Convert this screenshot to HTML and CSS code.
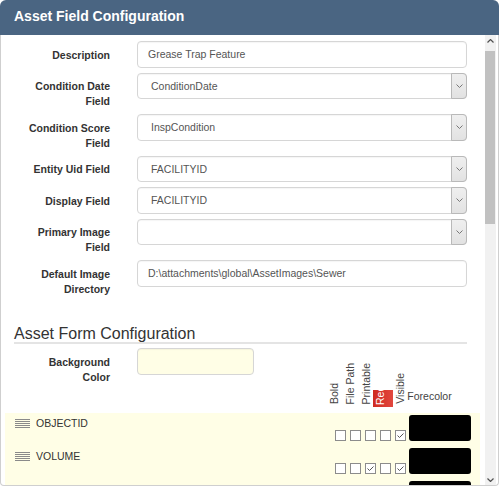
FILE: index.html
```html
<!DOCTYPE html>
<html>
<head>
<meta charset="utf-8">
<link rel="stylesheet" href="styles.css">
</head>
<body>
<div class="panel">
  <div class="header">Asset Field Configuration</div>
  <div class="body">
    <div class="content">
      <div class="frow">
        <div class="flabel">Description</div>
        <div class="input">Grease Trap Feature</div>
      </div>
      <div class="frow">
        <div class="flabel">Condition Date Field</div>
        <div class="input select"><span class="val">ConditionDate</span><span class="arrow"><svg width="7" height="4" viewBox="0 0 7 4"><polyline points="0.5,0.5 3.5,3.5 6.5,0.5" fill="none" stroke="#777" stroke-width="1"/></svg></span></div>
      </div>
      <div class="frow">
        <div class="flabel">Condition Score Field</div>
        <div class="input select"><span class="val">InspCondition</span><span class="arrow"><svg width="7" height="4" viewBox="0 0 7 4"><polyline points="0.5,0.5 3.5,3.5 6.5,0.5" fill="none" stroke="#777" stroke-width="1"/></svg></span></div>
      </div>
      <div class="frow">
        <div class="flabel">Entity Uid Field</div>
        <div class="input select"><span class="val">FACILITYID</span><span class="arrow"><svg width="7" height="4" viewBox="0 0 7 4"><polyline points="0.5,0.5 3.5,3.5 6.5,0.5" fill="none" stroke="#777" stroke-width="1"/></svg></span></div>
      </div>
      <div class="frow">
        <div class="flabel">Display Field</div>
        <div class="input select"><span class="val">FACILITYID</span><span class="arrow"><svg width="7" height="4" viewBox="0 0 7 4"><polyline points="0.5,0.5 3.5,3.5 6.5,0.5" fill="none" stroke="#777" stroke-width="1"/></svg></span></div>
      </div>
      <div class="frow">
        <div class="flabel">Primary Image Field</div>
        <div class="input select"><span class="val"></span><span class="arrow"><svg width="7" height="4" viewBox="0 0 7 4"><polyline points="0.5,0.5 3.5,3.5 6.5,0.5" fill="none" stroke="#777" stroke-width="1"/></svg></span></div>
      </div>
      <div class="frow">
        <div class="flabel">Default Image Directory</div>
        <div class="input">D:\attachments\global\AssetImages\Sewer</div>
      </div>

      <div class="legend">Asset Form Configuration</div>

      <div class="bgsec">
        <div class="flabel">Background Color</div>
        <div class="input bginput"></div>
        <div class="colheads">
          <div class="vl">Bold</div>
          <div class="vl gap">File Path</div>
          <div class="vl gap">Printable</div>
          <div class="req">Required</div>
          <div class="vl">Visible</div>
          <div class="fchead">Forecolor</div>
        </div>
      </div>

      <div class="list">
        <div class="lrow">
          <svg class="drag" width="15" height="9" viewBox="0 0 15 9"><g stroke="#8a8a8a" stroke-width="1"><line x1="0" y1="0.5" x2="15" y2="0.5"/><line x1="0" y1="2.5" x2="15" y2="2.5"/><line x1="0" y1="4.5" x2="15" y2="4.5"/><line x1="0" y1="6.5" x2="15" y2="6.5"/><line x1="0" y1="8.5" x2="15" y2="8.5"/></g></svg>
          <span class="name">OBJECTID</span>
          <div class="checks">
            <span class="cb"></span><span class="cb"></span><span class="cb"></span><span class="cb"></span>
            <span class="cb"><svg width="9" height="9" viewBox="0 0 9 9"><polyline points="1.5,4.5 3.5,6.5 7.5,2.5" fill="none" stroke="#555" stroke-width="1"/></svg></span>
          </div>
          <div class="fc"></div>
        </div>
        <div class="lrow">
          <svg class="drag" width="15" height="9" viewBox="0 0 15 9"><g stroke="#8a8a8a" stroke-width="1"><line x1="0" y1="0.5" x2="15" y2="0.5"/><line x1="0" y1="2.5" x2="15" y2="2.5"/><line x1="0" y1="4.5" x2="15" y2="4.5"/><line x1="0" y1="6.5" x2="15" y2="6.5"/><line x1="0" y1="8.5" x2="15" y2="8.5"/></g></svg>
          <span class="name">VOLUME</span>
          <div class="checks">
            <span class="cb"></span><span class="cb"></span>
            <span class="cb"><svg width="9" height="9" viewBox="0 0 9 9"><polyline points="1.5,4.5 3.5,6.5 7.5,2.5" fill="none" stroke="#555" stroke-width="1"/></svg></span>
            <span class="cb"></span>
            <span class="cb"><svg width="9" height="9" viewBox="0 0 9 9"><polyline points="1.5,4.5 3.5,6.5 7.5,2.5" fill="none" stroke="#555" stroke-width="1"/></svg></span>
          </div>
          <div class="fc"></div>
        </div>
        <div class="lrow">
          <svg class="drag" width="15" height="9" viewBox="0 0 15 9"><g stroke="#8a8a8a" stroke-width="1"><line x1="0" y1="0.5" x2="15" y2="0.5"/><line x1="0" y1="2.5" x2="15" y2="2.5"/><line x1="0" y1="4.5" x2="15" y2="4.5"/><line x1="0" y1="6.5" x2="15" y2="6.5"/><line x1="0" y1="8.5" x2="15" y2="8.5"/></g></svg>
          <span class="name">ESTABLISHMENT</span>
          <div class="checks">
            <span class="cb"></span><span class="cb"></span><span class="cb"></span><span class="cb"></span><span class="cb"></span>
          </div>
          <div class="fc"></div>
        </div>
      </div>
    </div>
    <div class="scrollbar">
      <div class="sb-btn"><svg width="7" height="4" viewBox="0 0 7 4"><polyline points="0.5,3.5 3.5,0.5 6.5,3.5" fill="none" stroke="#505050" stroke-width="1.2"/></svg></div>
      <div class="sb-thumb"></div>
      <div class="sb-track"></div>
      <div class="sb-btn"><svg width="7" height="4" viewBox="0 0 7 4"><polyline points="0.5,0.5 3.5,3.5 6.5,0.5" fill="none" stroke="#505050" stroke-width="1.2"/></svg></div>
    </div>
  </div>
</div>
</body>
</html>
```

FILE: styles.css
```css
* { box-sizing: border-box; }
body {
  margin: 0;
  background: #fff;
  font-family: "Liberation Sans", Arial, sans-serif;
}
.panel {
  width: 499px;
  height: 486px;
  display: flex;
  flex-direction: column;
}
.header {
  height: 35px;
  flex: none;
  background: #4a6582;
  color: #fff;
  font-weight: bold;
  font-size: 14px;
  line-height: 16px;
  padding: 8px 14px 0;
  border-radius: 6px 6px 0 0;
}
.body {
  flex: 1;
  min-height: 0;
  display: flex;
  border: 1px solid #cfcfcf;
  border-top: none;
  border-radius: 0 0 4px 4px;
  overflow: hidden;
}
.content {
  flex: 1;
  min-width: 0;
  overflow: hidden;
  padding: 6px 18px 0 13px;
}
.frow {
  display: flex;
  margin-bottom: 5px;
}
.flabel {
  width: 96px;
  flex: none;
  padding-left: 8px;
  padding-top: 6.5px;
  text-align: right;
  font-weight: bold;
  font-size: 10.5px;
  line-height: 15px;
  color: #333;
}
.input {
  flex: 1;
  margin-left: 27px;
  height: 26.5px;
  border: 1px solid #d6d6d6;
  border-radius: 4px;
  background: #fff;
  box-shadow: inset 0 1px 1px rgba(0,0,0,0.04);
  display: flex;
  align-items: center;
  padding-left: 10px;
  font-size: 10.5px;
  color: #555;
  white-space: nowrap;
}
.select { padding-left: 13px; }
.val { flex: 1; }
.arrow {
  align-self: stretch;
  width: 16px;
  margin: -1px -1px -1px 0;
  border: 1px solid #b9b9b9;
  border-radius: 0 4px 4px 0;
  background: linear-gradient(#efefef, #e2e2e2);
  display: flex;
  align-items: center;
  justify-content: center;
}
.legend {
  margin-top: 28.5px;
  font-size: 16px;
  line-height: 17px;
  color: #333;
  border-bottom: 2px solid #e4e4e4;
}
.bgsec {
  display: flex;
  align-items: flex-start;
  margin-top: 4px;
  height: 59px;
}
.bginput {
  flex: none;
  width: 117px;
  background: #fffee6;
}
.colheads {
  align-self: stretch;
  display: flex;
  align-items: flex-end;
  margin-left: 73.3px;
}
.vl {
  writing-mode: vertical-rl;
  transform: rotate(180deg);
  width: 14px;
  font-size: 10.5px;
  line-height: 14px;
  color: #444;
  white-space: nowrap;
  margin-bottom: 3px;
}
.vl.gap { margin-left: 2px; }
.req {
  writing-mode: vertical-rl;
  transform: rotate(180deg);
  width: 20px;
  height: 17px;
  overflow: hidden;
  padding-top: 2px;
  background: linear-gradient(to left, #cf2a20, #e2473d);
  color: #fff;
  font-size: 10.5px;
  line-height: 14px;
  white-space: nowrap;
}
.fchead {
  font-size: 10.5px;
  line-height: 15px;
  color: #444;
  margin-bottom: 3.5px;
}
.list {
  margin: 6px -13px 0 -9px;
  background: #fffee6;
  padding: 2px 9px 40px 10px;
}
.lrow {
  display: flex;
  align-items: flex-start;
  height: 26px;
  margin-bottom: 7px;
}
.drag {
  flex: none;
  margin-top: 3.5px;
}
.name {
  margin-left: 6px;
  font-size: 10.5px;
  line-height: 16px;
  color: #333;
}
.checks {
  margin-left: auto;
  align-self: flex-end;
  display: flex;
  gap: 4px;
}
.cb {
  width: 11px;
  height: 11px;
  border: 1px solid #8c8c8c;
  background: #fff;
  display: flex;
}
.fc {
  width: 62px;
  height: 26px;
  margin-left: 3px;
  background: #000;
  border-radius: 3px;
}
.scrollbar {
  width: 11px;
  flex: none;
  margin-right: 2px;
  background: #f1f1f1;
  display: flex;
  flex-direction: column;
}
.sb-btn {
  height: 11px;
  flex: none;
  display: flex;
  align-items: center;
  justify-content: center;
}
.sb-thumb {
  height: 173px;
  flex: none;
  margin: 5px 1px 0 0;
  background: #c1c1c1;
}
.sb-track { flex: 1; }
```
